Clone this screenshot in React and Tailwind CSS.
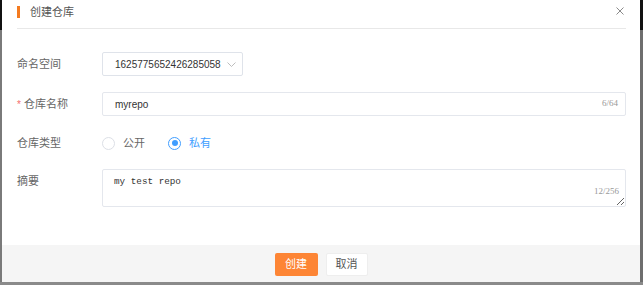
import React from "react";

// 创建仓库 dialog
const labelCls = "w-[100px] shrink-0 pl-[15px] text-[11px] text-[#666]";

export default function App() {
  return (
    <div
      className="w-[643px] h-[285px] flex flex-col bg-white overflow-hidden"
      style={{ fontFamily: '"Liberation Sans", "Noto Sans CJK SC", sans-serif' }}
    >
      <div className="flex flex-1 min-h-0">
        {/* left edge of the page behind */}
        <div className="w-[2px] flex flex-col">
          <div className="h-[30px] bg-[#111]" />
          <div className="flex-1 bg-[#7a7a7a]" />
        </div>

        <div className="flex-1 flex flex-col">
          {/* header */}
          <div className="ml-[15px] mr-[14px] h-[29px] flex items-start border-b border-[#e8e8e8]">
            <div className="mt-[6px] w-[3px] h-[12px] bg-[#f47b20]" />
            <div className="ml-[10px] mt-[4px] text-[11px] leading-[16px] text-[#555]">创建仓库</div>
            <div className="ml-auto mt-[7px] mr-[2px]">
              <svg width="8" height="8" viewBox="0 0 8 8" stroke="#8a8a8a" strokeWidth="1">
                <path d="M0.5 0.5L7.5 7.5M7.5 0.5L0.5 7.5" />
              </svg>
            </div>
          </div>

          {/* form */}
          <div className="flex-1 flex flex-col pt-[23px]">
            <div className="flex items-center h-[24px]">
              <div className={labelCls}>命名空间</div>
              <div className="w-[141px] h-[24px] border border-[#dfe3ea] rounded-[2px] flex items-center pl-[12px] pr-[6px]">
                <span className="text-[10px] text-[#333]">1625775652426285058</span>
                <svg className="ml-auto" width="9" height="5" viewBox="0 0 9 5" fill="none" stroke="#b5b5b5" strokeWidth="0.9">
                  <path d="M0.5 0.5L4.5 4.5L8.5 0.5" />
                </svg>
              </div>
            </div>

            <div className="flex items-center h-[24px] mt-[16px]">
              <div className={labelCls + " flex items-center"}>
                <span className="text-[#f56c6c] text-[10px] mr-[3px]">*</span>
                仓库名称
              </div>
              <div className="w-[524px] h-[24px] border border-[#e4e7ed] rounded-[2px] flex items-center pl-[12px] pr-[7px]">
                <span className="text-[10px] text-[#333]">myrepo</span>
                <span
                  className="ml-auto text-[9px] text-[#999]"
                  style={{ fontFamily: '"Liberation Serif", serif' }}
                >
                  6/64
                </span>
              </div>
            </div>

            <div className="flex items-center h-[24px] mt-[15px]">
              <div className={labelCls}>仓库类型</div>
              <div className="flex items-center">
                <span className="w-[13px] h-[13px] rounded-full border border-[#dcdfe6] bg-white" />
                <span className="ml-[8px] text-[11px] text-[#666]">公开</span>
                <span className="ml-[23px] w-[13px] h-[13px] rounded-full border border-[#409eff] bg-white flex items-center justify-center">
                  <span className="w-[6px] h-[6px] rounded-full bg-[#409eff]" />
                </span>
                <span className="ml-[8px] text-[11px] text-[#409eff]">私有</span>
              </div>
            </div>

            <div className="flex items-start mt-[14px]">
              <div className={labelCls + " pt-[4px]"}>摘要</div>
              <div className="relative w-[524px] h-[38px]">
                <textarea
                  readOnly
                  value="my test repo"
                  className="w-full h-full border border-[#e4e7ed] rounded-[2px] pl-[11px] pt-[5px] text-[9.3px] leading-[14px] text-[#333] outline-none"
                  style={{ fontFamily: '"Liberation Mono", monospace' }}
                />
                <span
                  className="absolute right-[7px] bottom-[9px] text-[9px] text-[#999]"
                  style={{ fontFamily: '"Liberation Serif", serif' }}
                >
                  12/256
                </span>
              </div>
            </div>
          </div>

          {/* footer */}
          <div className="h-[37px] bg-[#f5f5f5] flex items-center justify-center gap-[8px] pt-[1px]">
            <button className="w-[43px] h-[23px] rounded-[2px] bg-[#fd8535] text-white text-[11px]">创建</button>
            <button className="w-[42px] h-[23px] rounded-[2px] bg-white border border-[#eeeeee] text-[#555] text-[11px]">取消</button>
          </div>
        </div>

        {/* right edge */}
        <div className="w-[3px] flex flex-col">
          <div className="h-[30px] bg-[#111]" />
          <div className="flex-1 bg-[#6e6e6e]" />
        </div>
      </div>
      <div className="h-[3px] bg-[#8a8a8a]" />
    </div>
  );
}
